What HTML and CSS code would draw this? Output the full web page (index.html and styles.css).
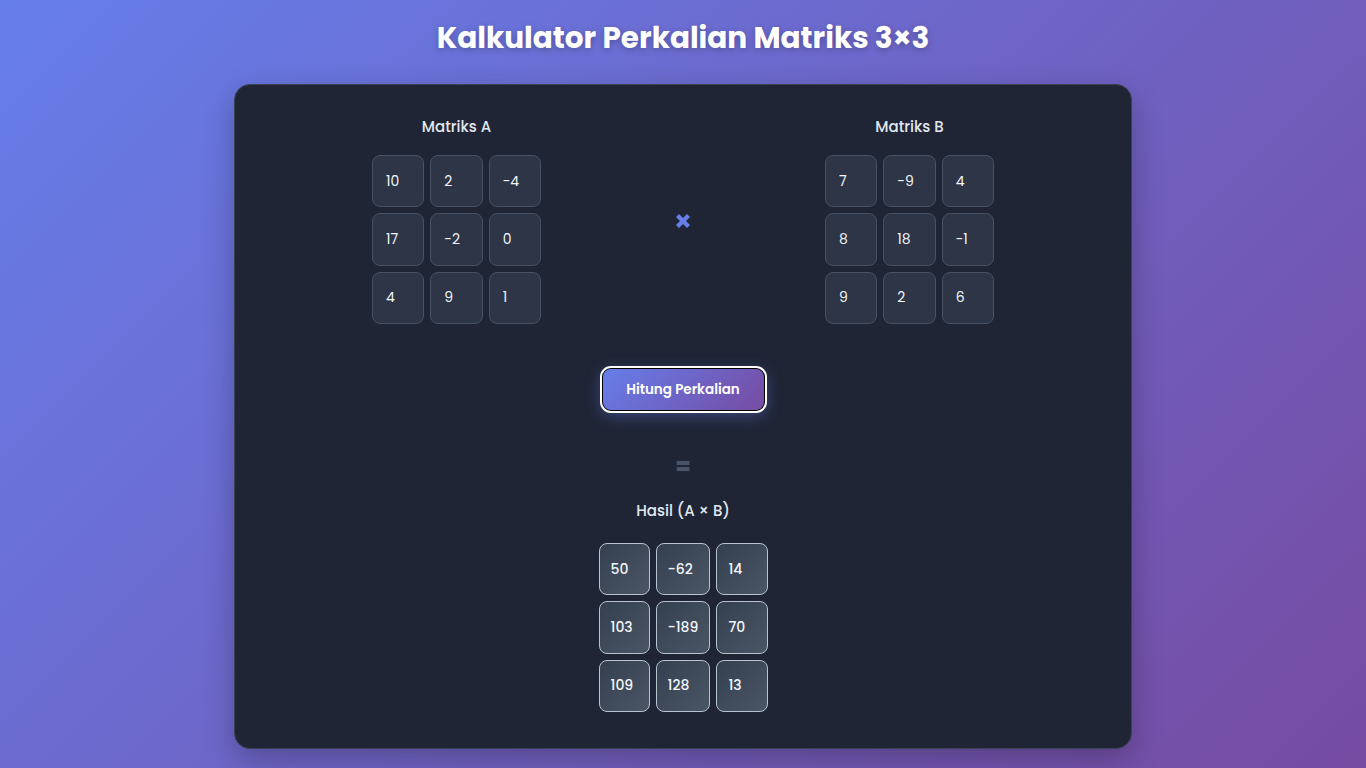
FILE: index.html
```html
<!DOCTYPE html>
<html lang="id">
<head>
<meta charset="utf-8">
<title>Kalkulator Perkalian Matriks 3×3</title>
<link rel="stylesheet" href="styles.css">
</head>
<body>
<h1 class="title">Kalkulator Perkalian Matriks 3×3</h1>
<main class="card">
  <section class="inputs">
    <div class="matrix">
      <h2 class="matrix-title">Matriks A</h2>
      <div class="grid">
        <div class="cell">10</div><div class="cell">2</div><div class="cell">-4</div>
        <div class="cell">17</div><div class="cell">-2</div><div class="cell">0</div>
        <div class="cell">4</div><div class="cell">9</div><div class="cell">1</div>
      </div>
    </div>
    <div class="operator">
      <svg width="20" height="20" viewBox="0 0 20 20" aria-hidden="true">
        <path d="M3 6 L6 3 L10 7 L14 3 L17 6 L13 10 L17 14 L14 17 L10 13 L6 17 L3 14 L7 10 Z" fill="#667eea"/>
      </svg>
    </div>
    <div class="matrix">
      <h2 class="matrix-title">Matriks B</h2>
      <div class="grid">
        <div class="cell">7</div><div class="cell">-9</div><div class="cell">4</div>
        <div class="cell">8</div><div class="cell">18</div><div class="cell">-1</div>
        <div class="cell">9</div><div class="cell">2</div><div class="cell">6</div>
      </div>
    </div>
  </section>
  <div class="actions">
    <button class="btn">Hitung Perkalian</button>
  </div>
  <div class="equals">=</div>
  <section class="result">
    <h2 class="matrix-title">Hasil (A × B)</h2>
    <div class="grid">
      <div class="cell res">50</div><div class="cell res">-62</div><div class="cell res">14</div>
      <div class="cell res">103</div><div class="cell res">-189</div><div class="cell res">70</div>
      <div class="cell res">109</div><div class="cell res">128</div><div class="cell res">13</div>
    </div>
  </section>
</main>
</body>
</html>
```

FILE: styles.css
```css
* { box-sizing: border-box; }
html, body { height: 100%; }
body {
  margin: 0;
  min-height: 100vh;
  font-family: "Poppins", "Inter", "Noto Sans", sans-serif;
  background: linear-gradient(135deg, #667eea 0%, #764ba2 100%);
  color: #e2e8f0;
  padding: 19px 0 19px;
  overflow: hidden;
}
.title {
  margin: 0 0 27px;
  text-align: center;
  font-size: 29.5px;
  line-height: 38px;
  font-weight: 700;
  color: #fff;
  text-shadow: 0 2px 6px rgba(0,0,0,0.25);
}
.card {
  width: 898px;
  margin: 0 auto;
  background: #1f2535;
  border: 1px solid #3a4152;
  border-radius: 16px;
  padding: 32px 40px 36px;
  box-shadow: 0 10px 30px rgba(0,0,0,0.25);
}
.inputs {
  display: grid;
  grid-template-columns: 1fr 30px 1fr;
  gap: 30px;
}
.matrix { display: flex; flex-direction: column; align-items: center; }
.matrix-title {
  margin: 0 0 18px;
  font-size: 15px;
  line-height: 20px;
  font-weight: 500;
  color: #e2e8f0;
  text-align: center;
}
.grid {
  display: grid;
  width: 169px;
  height: 169px;
  grid-template-columns: repeat(3, 1fr);
  grid-template-rows: repeat(3, 1fr);
  gap: 6px;
}
.cell {
  background: #2d3546;
  border: 1px solid #485164;
  border-radius: 8px;
  padding: 0 13px;
  display: flex;
  align-items: center;
  font-size: 14px;
  color: #f1f5f9;
}
.operator {
  display: flex;
  align-items: center;
  justify-content: center;
}
.operator svg { display: block; }
.actions {
  display: flex;
  justify-content: center;
  margin-top: 43px;
}
.btn {
  width: 165px;
  height: 45px;
  border-radius: 10px;
  border: 2px solid #000;
  outline: 2px solid #fff;
  outline-offset: -1px;
  background: linear-gradient(135deg, #667eea 0%, #764ba2 100%);
  color: #fff;
  font-family: inherit;
  font-size: 13.5px;
  font-weight: 600;
  box-shadow: 0 4px 16px rgba(102,126,234,0.4);
  cursor: pointer;
}
.equals {
  text-align: center;
  margin-top: 42px;
  font-size: 22px;
  line-height: 26px;
  font-weight: 800;
  color: #4a5568;
}
.result {
  display: flex;
  flex-direction: column;
  align-items: center;
  margin-top: 21px;
}
.result .matrix-title { margin-bottom: 22px; }
.cell.res {
  background: linear-gradient(135deg, #344050 0%, #4a5566 100%);
  border: 1px solid #b9c2cf;
  font-weight: 500;
  padding: 0 11px;
}
```
